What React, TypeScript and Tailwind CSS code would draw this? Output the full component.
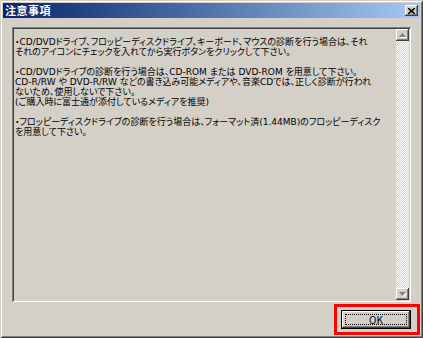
import React from "react";

const bevelOut =
  "shadow-[inset_-1px_-1px_#404040,inset_1px_1px_#ffffff,inset_-2px_-2px_#808080,inset_2px_2px_#d4d0c8]";

function Arrow({ up }: { up: boolean }) {
  return (
    <svg width="8" height="5" viewBox="0 0 8 5">
      {up ? (
        <>
          <polygon points="4.5,1 8,5 1,5" fill="#ffffff" />
          <polygon points="3.5,0 7,4 0,4" fill="#808080" />
        </>
      ) : (
        <>
          <polygon points="1,1 8,1 4.5,5" fill="#ffffff" />
          <polygon points="0,0 7,0 3.5,4" fill="#808080" />
        </>
      )}
    </svg>
  );
}

export default function App() {
  return (
    <div className="relative w-[423px] h-[338px] bg-[#d4d0c8] shadow-[inset_1px_1px_#d4d0c8,inset_-1px_-1px_#404040,inset_2px_2px_#ffffff,inset_-2px_-2px_#808080] p-[3px] flex flex-col font-['Noto_Sans_CJK_JP','Noto_Sans',sans-serif]">
      <div className="h-[15px] bg-linear-to-r from-[#0a246a] to-[#a6caf0] flex items-center justify-between pl-[2px] pr-[2px]">
        <span className="text-white font-bold text-[11px] leading-none tracking-[0.5px]">注意事項</span>
        <div className={`w-[13px] h-[11px] bg-[#d4d0c8] ${bevelOut} flex items-center justify-center`}>
          <svg width="7" height="6" viewBox="0 0 7 6">
            <path d="M0 0 L7 6 M7 0 L0 6" stroke="#000" strokeWidth="1.6" />
          </svg>
        </div>
      </div>

      <div className="mt-[9px] mx-[9px] h-[275px] p-[2px] flex shadow-[inset_1px_1px_#808080,inset_-1px_-1px_#ffffff,inset_2px_2px_#404040,inset_-2px_-2px_#d4d0c8]">
        <div className="flex-1 pt-[8px] pl-[1px] text-[9px] leading-[10px] text-black whitespace-nowrap tracking-[0px] font-['DejaVu_Sans','Noto_Sans_CJK_JP',sans-serif] [font-feature-settings:'palt']">
          <div>・CD/DVDドライブ、フロッピーディスクドライブ、キーボード、マウスの診断を行う場合は、それ</div>
          <div>それのアイコンにチェックを入れてから実行ボタンをクリックして下さい。</div>
          <div>&nbsp;</div>
          <div>・CD/DVDドライブの診断を行う場合は、CD-ROM または DVD-ROM を用意して下さい。</div>
          <div>CD-R/RW や DVD-R/RW などの書き込み可能メディアや、音楽CDでは、正しく診断が行われ</div>
          <div>ないため、使用しないで下さい。</div>
          <div>(ご購入時に富士通が添付しているメディアを推奨)</div>
          <div>&nbsp;</div>
          <div>・フロッピーディスクドライブの診断を行う場合は、フォーマット済(1.44MB)のフロッピーディスク</div>
          <div>を用意して下さい。</div>
        </div>
        <div className="w-[13px] flex flex-col">
          <div className={`h-[12px] bg-[#d4d0c8] ${bevelOut} flex items-center justify-center`}>
            <Arrow up />
          </div>
          <div className="flex-1 bg-[repeating-conic-gradient(#ffffff_0%_25%,#d4d0c8_0%_50%)] bg-[length:2px_2px]" />
          <div className={`h-[12px] bg-[#d4d0c8] ${bevelOut} flex items-center justify-center`}>
            <Arrow up={false} />
          </div>
        </div>
      </div>

      <div className="mt-[8px] pr-[9px] flex justify-end">
        <div className="w-[70px] h-[19px] border border-black bg-[#d4d0c8] shadow-[inset_-1px_-1px_#404040,inset_1px_1px_#ffffff,inset_-2px_-2px_#808080] flex items-center justify-center p-[3px]">
          <div className="w-full h-full border border-dotted border-black flex items-center justify-center">
            <span className="text-[10px] leading-none text-black">OK</span>
          </div>
        </div>
      </div>

      <div className="absolute left-[334px] top-[304px] w-[86px] h-[31px] border-[3px] border-[#ff0000]" />
    </div>
  );
}
